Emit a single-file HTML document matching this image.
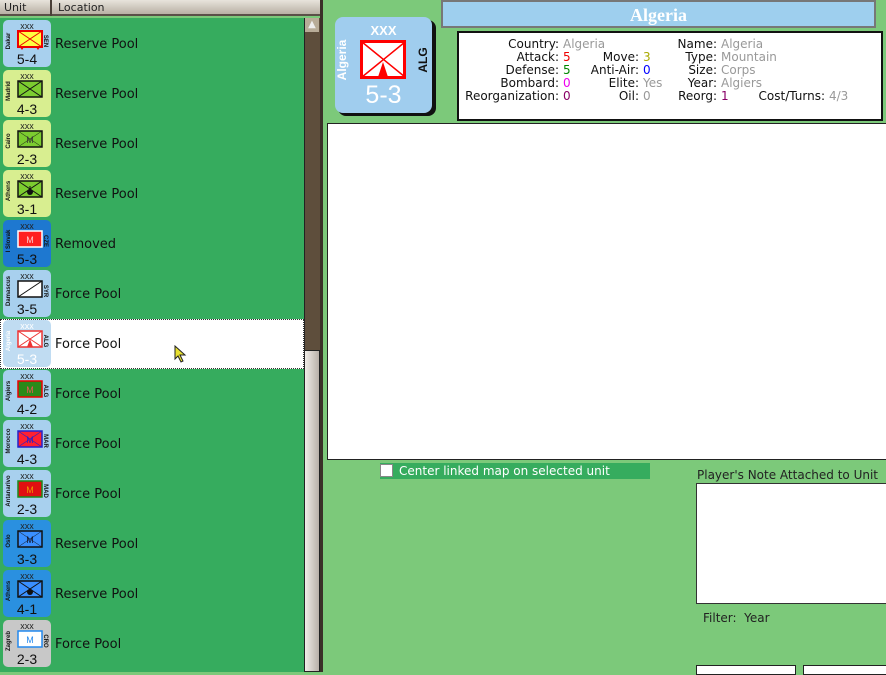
<!DOCTYPE html>
<html><head><meta charset="utf-8"><style>
*{margin:0;padding:0;box-sizing:border-box}
body{width:886px;height:672px;overflow:hidden;position:relative;font-family:"DejaVu Sans",Verdana,"Liberation Sans",sans-serif;background:#7cc97a}
.hdr{position:absolute;top:0;left:0;width:320px;height:16px;background:linear-gradient(#e8e4dc,#b8b0a4);border-bottom:2px solid #5a5048;font-size:11px;color:#222}
.hdr span{position:absolute;top:1px}
.hdr i{position:absolute;top:0;width:2px;height:16px;background:#4a4038}
.list{position:absolute;top:18px;left:0;width:304px;height:654px;background:#36ac5e}
.row{position:absolute;left:0;width:304px;height:50px}
.loc{position:absolute;left:55px;top:18px;font-size:13px;color:#111}
.c{position:absolute;left:3px;width:48px;height:47px;border-radius:5px;font-family:"Liberation Sans",sans-serif}
.c .x{position:absolute;top:1px;left:0;width:100%;text-align:center;font-size:9px;color:#222}
.c svg{position:absolute;left:14px;top:10px}
.c .n{position:absolute;bottom:0;left:0;width:100%;text-align:center;font-size:14px;color:#111;line-height:15px}
.c .l{position:absolute;left:-12px;top:18px;width:36px;font-size:6px;font-weight:bold;transform:rotate(-90deg);text-align:center;color:#111}
.c .r{position:absolute;right:-4px;top:18px;width:20px;font-size:6px;font-weight:bold;transform:rotate(90deg);text-align:center;color:#111}
.sb{position:absolute;left:304px;top:18px;width:16px;height:654px;background:#5e4e3c;border-left:1px solid #222}
.thumb{position:absolute;left:304px;top:350px;width:16px;height:322px;background:linear-gradient(90deg,#f0ece8,#b8b0a8);border:1px solid #222}
.up{position:absolute;left:305px;top:18px;width:14px;height:14px;background:#b8ac98;color:#eee;font-size:10px;text-align:center;line-height:14px}
.div{position:absolute;left:320px;top:0;width:3px;height:672px;background:#3a3028}
.info{position:absolute;left:457px;top:31px;width:426px;height:90px;background:#fff;border:2px solid #111;font-size:12px;line-height:13px;color:#111}
.info div{position:absolute;white-space:nowrap}
.lab{text-align:right}
.g{color:#999}
</style></head><body>
<div class="hdr"><span style="left:4px">Unit</span><i style="left:50px"></i><span style="left:58px">Location</span></div>
<div class="list">
<div class="row" style="top:1px"><div class="loc">Reserve Pool</div></div>
<div class="row" style="top:51px"><div class="loc">Reserve Pool</div></div>
<div class="row" style="top:101px"><div class="loc">Reserve Pool</div></div>
<div class="row" style="top:151px"><div class="loc">Reserve Pool</div></div>
<div class="row" style="top:201px"><div class="loc">Removed</div></div>
<div class="row" style="top:251px"><div class="loc">Force Pool</div></div>
<div class="row" style="top:301px;background:#fff;border:1px dotted #333"><div class="loc" style="left:54px;top:17px">Force Pool</div><svg style="position:absolute;left:173px;top:25px" width="14" height="18"><path d="M1 1 L1 14 L4 11 L7 17 L9 16 L6 10 L11 10 Z" fill="#e8e030" stroke="#222" stroke-width="1"/></svg></div>
<div class="row" style="top:351px"><div class="loc">Force Pool</div></div>
<div class="row" style="top:401px"><div class="loc">Force Pool</div></div>
<div class="row" style="top:451px"><div class="loc">Force Pool</div></div>
<div class="row" style="top:501px"><div class="loc">Reserve Pool</div></div>
<div class="row" style="top:551px"><div class="loc">Reserve Pool</div></div>
<div class="row" style="top:601px"><div class="loc">Force Pool</div></div>
</div>

<div class="c" style="top:20px;background:#a8d0ee"><span class="x">xxx</span><svg width="26" height="20"><rect x="1" y="1" width="24" height="16" fill="#ffff40" stroke="#e00" stroke-width="2"/><path d="M1 1L25 17M25 1L1 17" stroke="#e00"/><path d="M3 17L5 20L7 17M19 17L21 20L23 17" fill="#e00"/></svg><span class="l">Dakar</span><span class="r">SEN</span><span class="n">5-4</span></div>
<div class="c" style="top:70px;background:#d8ee90"><span class="x">xxx</span><svg width="26" height="20"><rect x="1" y="1" width="24" height="16" fill="#7ccc30" stroke="#111" stroke-width="1.5"/><path d="M1 1L25 17M25 1L1 17" stroke="#111"/></svg><span class="l">Madrid</span><span class="n">4-3</span></div>
<div class="c" style="top:120px;background:#d8ee90"><span class="x">xxx</span><svg width="26" height="20"><rect x="1" y="1" width="24" height="16" fill="#7ccc30" stroke="#111" stroke-width="1.5"/><path d="M1 1L25 17M25 1L1 17" stroke="#111" stroke-width=".5"/><text x="13" y="13" font-size="9" text-anchor="middle" fill="#333">M</text></svg><span class="l">Cairo</span><span class="n">2-3</span></div>
<div class="c" style="top:170px;background:#d8ee90"><span class="x">xxx</span><svg width="26" height="20"><rect x="1" y="1" width="24" height="16" fill="#7ccc30" stroke="#111" stroke-width="1.5"/><path d="M1 1L25 17M25 1L1 17" stroke="#111"/><path d="M13 6V11" stroke="#111"/><circle cx="13" cy="12" r="3" fill="#111"/></svg><span class="l">Athens</span><span class="n">3-1</span></div>
<div class="c" style="top:220px;background:#1e78d0"><span class="x">xxx</span><svg width="26" height="20"><rect x="1" y="1" width="24" height="16" fill="#ff2020" stroke="#fff" stroke-width="1.5"/><text x="13" y="13" font-size="9" text-anchor="middle" fill="#fcc">M</text></svg><span class="l">I Slovak</span><span class="r">CZE</span><span class="n">5-3</span></div>
<div class="c" style="top:270px;background:#a8d0ee"><span class="x">xxx</span><svg width="26" height="20"><rect x="1" y="1" width="24" height="16" fill="#fff" stroke="#111" stroke-width="1.5"/><path d="M1 17L25 1" stroke="#111"/></svg><span class="l">Damascus</span><span class="r">SYR</span><span class="n">3-5</span></div>
<div class="c" style="top:320px;background:#c0dcf2"><span class="x" style="color:#fff">xxx</span><svg width="26" height="20"><rect x="1" y="1" width="24" height="16" fill="#fff" stroke="#e33" stroke-width="1.5"/><path d="M1 1L25 17M25 1L1 17" stroke="#e33"/><path d="M10 17L13 9L16 17Z" fill="#e33"/></svg><span class="l" style="color:#fff">Algeria</span><span class="r">ALG</span><span class="n" style="color:#fff">5-3</span></div>
<div class="c" style="top:370px;background:#a8d0ee"><span class="x">xxx</span><svg width="26" height="20"><rect x="1" y="1" width="24" height="16" fill="#2a8a1a" stroke="#e00" stroke-width="1.5"/><text x="13" y="13" font-size="9" text-anchor="middle" fill="#e55">M</text></svg><span class="l">Algiers</span><span class="r">ALG</span><span class="n">4-2</span></div>
<div class="c" style="top:420px;background:#a8d0ee"><span class="x">xxx</span><svg width="26" height="20"><rect x="1" y="1" width="24" height="16" fill="#ff2030" stroke="#22c" stroke-width="1.5"/><path d="M1 1L25 17M25 1L1 17" stroke="#22c" stroke-width=".6"/><text x="13" y="13" font-size="9" text-anchor="middle" fill="#22c">M</text></svg><span class="l">Morocco</span><span class="r">MAR</span><span class="n">4-3</span></div>
<div class="c" style="top:470px;background:#a8d0ee"><span class="x">xxx</span><svg width="26" height="20"><rect x="1" y="1" width="24" height="16" fill="#e01010" stroke="#1a8a1a" stroke-width="1.5"/><text x="13" y="13" font-size="9" text-anchor="middle" fill="#e90">M</text></svg><span class="l">Antanarivo</span><span class="r">MAD</span><span class="n">2-3</span></div>
<div class="c" style="top:520px;background:#2a90e0"><span class="x">xxx</span><svg width="26" height="20"><rect x="1" y="1" width="24" height="16" fill="#3a90ff" stroke="#111" stroke-width="1.5"/><path d="M1 1L25 17M25 1L1 17" stroke="#111" stroke-width=".5"/><text x="13" y="13" font-size="9" text-anchor="middle" fill="#112">M</text></svg><span class="l">Oslo</span><span class="n">3-3</span></div>
<div class="c" style="top:570px;background:#2a90e0"><span class="x">xxx</span><svg width="26" height="20"><rect x="1" y="1" width="24" height="16" fill="#3a90ff" stroke="#111" stroke-width="1.5"/><path d="M1 1L25 17M25 1L1 17" stroke="#111"/><circle cx="13" cy="12" r="3" fill="#111"/></svg><span class="l">Athens</span><span class="n">4-1</span></div>
<div class="c" style="top:620px;background:#c8c8c8"><span class="x">xxx</span><svg width="26" height="20"><rect x="1" y="1" width="24" height="16" fill="#fff" stroke="#28e" stroke-width="1.5"/><text x="13" y="13" font-size="9" text-anchor="middle" fill="#28e">M</text></svg><span class="l">Zagreb</span><span class="r">CRO</span><span class="n">2-3</span></div>

<div class="sb"></div><div class="up">▲</div><div class="thumb"></div>
<div class="div"></div>

<div style="position:absolute;left:338px;top:20px;width:98px;height:96px;background:#111;border-radius:8px"></div>
<div style="position:absolute;left:335px;top:17px;width:97px;height:96px;background:#a0cdee;border-radius:8px;font-family:'Liberation Sans',sans-serif">
<div style="position:absolute;top:6px;width:100%;text-align:center;color:#fff;font-weight:bold;font-size:13px">XXX</div>
<svg style="position:absolute;left:25px;top:23px" width="47" height="40"><rect x="1.5" y="1.5" width="43" height="36" fill="#fff" stroke="#f00" stroke-width="3"/><path d="M2 2L45 37M45 2L2 37" stroke="#f00" stroke-width="1.5"/><path d="M18 37L23 22L28 37Z" fill="#f00"/></svg>
<div style="position:absolute;left:-14px;top:36px;width:42px;transform:rotate(-90deg);color:#fff;font-weight:bold;font-size:12px;text-align:center">Algeria</div>
<div style="position:absolute;left:72px;top:36px;width:32px;transform:rotate(-90deg);color:#111;font-weight:bold;font-size:12px;text-align:center">ALG</div>
<div style="position:absolute;bottom:3px;width:100%;text-align:center;color:#fff;font-size:25px">5-3</div>
</div>

<div style="position:absolute;left:441px;top:0;width:435px;height:28px;background:#9ecfee;border:2px solid #777;text-align:center;color:#fff;font-family:'Liberation Serif',serif;font-weight:bold;font-size:18px;line-height:26px">Algeria</div>

<div class="info">
<div class="lab" style="left:0;width:100px;top:5px">Country:</div><div style="left:104px;top:5px" class="g">Algeria</div>
<div class="lab" style="left:0;width:100px;top:18px">Attack:</div><div style="left:104px;top:18px;color:#e00">5</div>
<div class="lab" style="left:0;width:100px;top:31px">Defense:</div><div style="left:104px;top:31px;color:#080">5</div>
<div class="lab" style="left:0;width:100px;top:44px">Bombard:</div><div style="left:104px;top:44px;color:#e0e">0</div>
<div class="lab" style="left:0;width:100px;top:57px">Reorganization:</div><div style="left:104px;top:57px;color:#806">0</div>
<div class="lab" style="left:100px;width:80px;top:18px">Move:</div><div style="left:184px;top:18px;color:#aa0">3</div>
<div class="lab" style="left:100px;width:80px;top:31px">Anti-Air:</div><div style="left:184px;top:31px;color:#00f">0</div>
<div class="lab" style="left:100px;width:80px;top:44px">Elite:</div><div style="left:184px;top:44px" class="g">Yes</div>
<div class="lab" style="left:100px;width:80px;top:57px">Oil:</div><div style="left:184px;top:57px" class="g">0</div>
<div class="lab" style="left:180px;width:78px;top:5px">Name:</div><div style="left:262px;top:5px" class="g">Algeria</div>
<div class="lab" style="left:180px;width:78px;top:18px">Type:</div><div style="left:262px;top:18px" class="g">Mountain</div>
<div class="lab" style="left:180px;width:78px;top:31px">Size:</div><div style="left:262px;top:31px" class="g">Corps</div>
<div class="lab" style="left:180px;width:78px;top:44px">Year:</div><div style="left:262px;top:44px" class="g">Algiers</div>
<div class="lab" style="left:180px;width:78px;top:57px">Reorg:</div><div style="left:262px;top:57px;color:#806">1</div>
<div class="lab" style="left:260px;width:106px;top:57px">Cost/Turns:</div><div style="left:370px;top:57px" class="g">4/3</div>
</div>
<div style="position:absolute;left:327px;top:123px;width:559px;height:337px;background:#fff;border:1px solid #222;border-right:none"></div>

<div style="position:absolute;left:380px;top:463px;width:270px;height:16px;background:#36ac5e;color:#fff;font-size:12px;line-height:16px;padding-left:19px">Center linked map on selected unit</div>
<div style="position:absolute;left:380px;top:464px;width:13px;height:13px;background:#fff;border:1px solid #888"></div>
<div style="position:absolute;left:697px;top:468px;font-size:12px;color:#222;white-space:nowrap">Player's Note Attached to Unit</div>
<div style="position:absolute;left:696px;top:483px;width:190px;height:121px;background:#fff;border:1px solid #333;border-right:none"></div>
<div style="position:absolute;left:703px;top:611px;font-size:12px;color:#222">Filter:&nbsp; Year</div>
<div style="position:absolute;left:696px;top:665px;width:100px;height:10px;background:#fff;border:1px solid #222"></div>
<div style="position:absolute;left:803px;top:665px;width:90px;height:10px;background:#fff;border:1px solid #222"></div>
</body></html>
